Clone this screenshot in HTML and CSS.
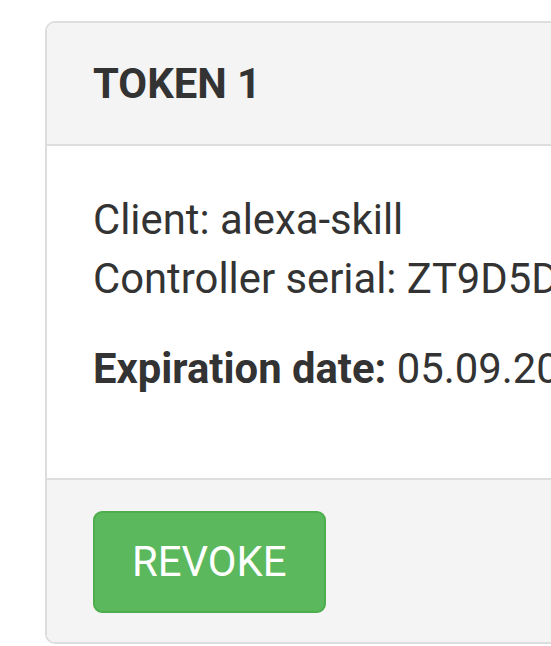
FILE: index.html
```html
<!DOCTYPE html>
<html lang="en">
<head>
<meta charset="utf-8">
<title>Token</title>
<link rel="stylesheet" href="styles.css">
</head>
<body>
<div class="page">
  <div class="panel">
    <div class="panel-heading">
      <h3 class="panel-title">TOKEN 1</h3>
    </div>
    <div class="panel-body">
      <p>Client: alexa-skill<br>Controller serial: ZT9D5D2A7F31</p>
      <p><strong>Expiration date:</strong> 05.09.2024 14:32</p>
    </div>
    <div class="panel-footer">
      <button class="btn btn-success" type="button">REVOKE</button>
    </div>
  </div>
</div>
</body>
</html>
```

FILE: styles.css
```css
html, body {
  margin: 0;
  padding: 0;
  overflow: hidden;
  background: #ffffff;
}

body {
  font-family: Roboto, "Liberation Sans", sans-serif;
  font-size: 41.8px;
  line-height: 1.42857;
  color: #333333;
}

.page {
  padding: 21px 0 0 45px;
}

.panel {
  width: 820px;
  border: 2px solid #dddddd;
  border-radius: 10px;
  background: #ffffff;
  overflow: hidden;
}

.panel-heading {
  background: #f4f4f4;
  border-bottom: 2px solid #dddddd;
  padding: 31px 46px 30px 46px;
}

.panel-title {
  margin: 0;
  font-size: 41.8px;
  font-weight: 700;
  line-height: 1.42857;
  color: #333333;
}

.panel-body {
  padding: 44px 46px 49px 46px;
}

.panel-body p {
  margin: 0 0 30px 0;
}

.panel-body strong {
  font-weight: 700;
}

.panel-footer {
  background: #f4f4f4;
  border-top: 2px solid #dddddd;
  padding: 31px 46px 29px 46px;
}

.btn {
  display: block;
  font-family: Roboto, "Liberation Sans", sans-serif;
  font-size: 41.8px;
  line-height: 1.42857;
  padding: 19px 37px;
  border: 2px solid #4cae4c;
  border-radius: 9px;
  background: #5cb85c;
  color: #ffffff;
  cursor: pointer;
}
```
